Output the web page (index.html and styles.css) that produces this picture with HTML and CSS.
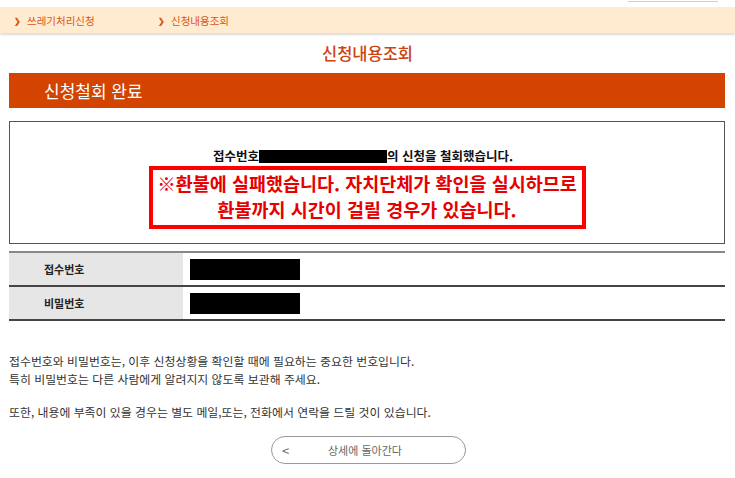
FILE: index.html
```html
<!DOCTYPE html>
<html lang="ko">
<head>
<meta charset="utf-8">
<link rel="stylesheet" href="styles.css">
</head>
<body>
<div class="topstrip"><div class="topbox"></div></div>
<nav class="crumbs">
  <span class="crumb crumb-first"><span class="chev">❯</span>쓰레기처리신청</span>
  <span class="crumb"><span class="chev">❯</span>신청내용조회</span>
</nav>
<h1 class="page-title">신청내용조회</h1>
<main class="content">
  <h2 class="section-bar">신청철회 완료</h2>
  <div class="result-box">
    <p class="result-line">접수번호<span class="redact-inline"></span>의 신청을 철회했습니다.</p>
    <div class="warn-box">
      <p>※환불에 실패했습니다. 자치단체가 확인을 실시하므로</p>
      <p>환불까지 시간이 걸릴 경우가 있습니다.</p>
    </div>
  </div>
  <table class="info-table">
    <tr><th>접수번호</th><td><span class="redact-cell"></span></td></tr>
    <tr><th>비밀번호</th><td><span class="redact-cell"></span></td></tr>
  </table>
  <div class="notes">
    <p>접수번호와 비밀번호는, 이후 신청상황을 확인할 때에 필요하는 중요한 번호입니다.<br>특히 비밀번호는 다른 사람에게 알려지지 않도록 보관해 주세요.</p>
    <p>또한, 내용에 부족이 있을 경우는 별도 메일,또는, 전화에서 연락을 드릴 것이 있습니다.</p>
  </div>
  <div class="btn-row">
    <button class="back-btn"><span class="lt">&lt;</span><span class="btn-label">상세에 돌아간다</span></button>
  </div>
</main>
</body>
</html>
```
FILE: styles.css
```css
* { box-sizing: border-box; }
body {
  margin: 0;
  font-family: "Noto Sans CJK KR", "Liberation Sans", sans-serif;
  background: #fff;
  color: #333;
}
.topstrip {
  height: 7px;
  display: flex;
  justify-content: flex-end;
  padding-right: 17px;
}
.topbox {
  width: 90px;
  height: 2px;
  border-bottom: 1px solid #d0d0d0;
}
.crumbs {
  height: 26px;
  background: #feebd0;
  box-shadow: 0 2px 2px #dcdcdc;
  display: flex;
  align-items: center;
  padding-left: 14px;
  font-size: 10.5px;
  color: #d9541a;
}
.crumb { display: flex; align-items: center; }
.crumb-first { width: 144px; }
.chev { font-size: 8px; margin-right: 6px; font-weight: bold; }
.page-title {
  margin: 10px 0 0;
  text-align: center;
  font-size: 16.5px;
  font-weight: 500;
  color: #d04010;
  line-height: 20px;
}
.content {
  padding: 0 10px 0 9px;
}
.section-bar {
  margin: 10px 0 0;
  height: 35px;
  background: #d24400;
  color: #fff;
  font-size: 17px;
  font-weight: 400;
  line-height: 35px;
  padding-left: 35px;
}
.result-box {
  margin-top: 13px;
  border: 1px solid #555;
  height: 123px;
  display: flex;
  flex-direction: column;
  align-items: center;
  padding-top: 26px;
}
.result-line {
  margin: 0 0 0 -8px;
  font-size: 12.5px;
  font-weight: bold;
  color: #111;
  line-height: 16px;
  display: flex;
  align-items: center;
}
.redact-inline {
  display: inline-block;
  width: 128px;
  height: 13px;
  background: #000;
}
.warn-box {
  margin-top: 2px;
  width: 437px;
  border: 4px solid #ff0000;
  padding: 0 0 3px;
  text-align: center;
  color: #e60000;
  font-size: 18.5px;
  font-weight: bold;
  line-height: 26px;
  white-space: nowrap;
}
.warn-box p { margin: 0; }
.info-table {
  margin-top: 7px;
  width: 100%;
  border-collapse: collapse;
  border-top: 2px solid #888;
}
.info-table th, .info-table td {
  height: 34px;
  border-bottom: 2px solid #444;
  padding: 0;
}
.info-table th {
  width: 174px;
  background: #e6e6e6;
  text-align: left;
  padding-left: 35px;
  font-size: 11px;
  font-weight: bold;
  color: #222;
}
.info-table td { padding-left: 7px; }
.redact-cell {
  display: block;
  width: 110px;
  height: 21px;
  background: #000;
}
.notes {
  margin-top: 31px;
  font-size: 11.9px;
  line-height: 18px;
  color: #333;
}
.notes p { margin: 0 0 15px; }
.btn-row {
  display: flex;
  padding-left: 262px;
  margin-top: 7px;
}
.back-btn {
  width: 195px;
  height: 28px;
  border: 1px solid #999;
  border-radius: 14px;
  background: #fff;
  display: flex;
  align-items: center;
  padding: 0 0 0 10px;
  font-family: inherit;
  color: #666;
  font-size: 11px;
}
.lt { font-size: 13px; width: 46px; text-align: left; }
```
